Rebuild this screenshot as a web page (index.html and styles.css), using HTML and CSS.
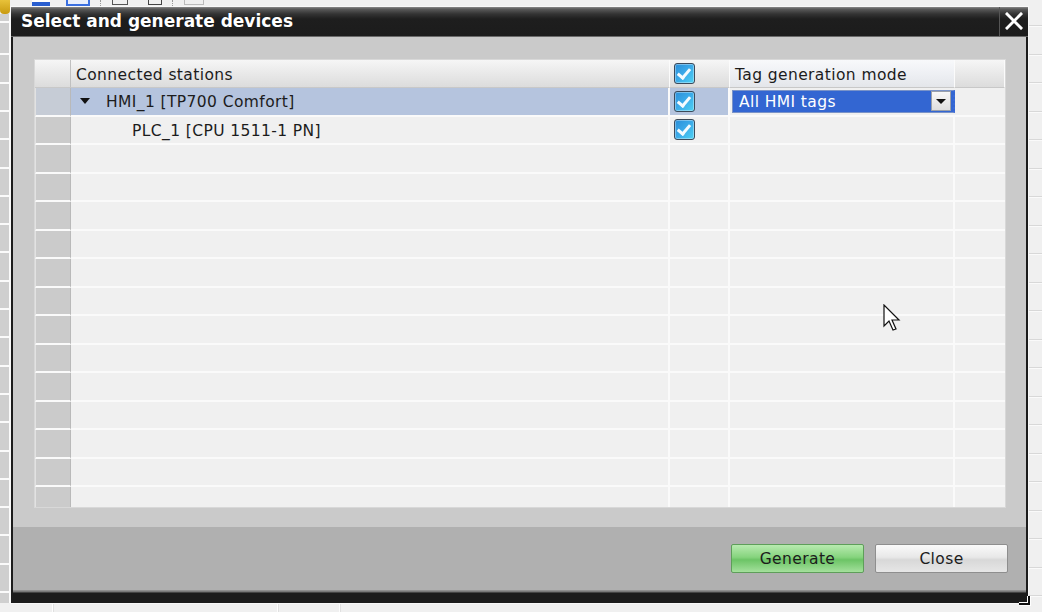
FILE: index.html
```html
<!DOCTYPE html>
<html>
<head>
<meta charset="utf-8">
<link rel="stylesheet" href="styles.css">
</head>
<body>
<div class="desktop">
  <div class="toolbar">
    <span class="tb tb-yellow"></span>
    <span class="tb tb-blue1"></span>
    <span class="tb tb-blue2"></span>
    <span class="tb-sep"></span>
    <span class="tb tb-grey1"></span>
    <span class="tb tb-grey2"></span>
    <span class="tb-sep"></span>
    <span class="tb tb-grey3"></span>
  </div>
  <div class="left-strip"></div>
  <div class="right-strip"></div>
  <div class="bottom-strip"><span class="bl bl1"></span><span class="bl bl2"></span><span class="bl bl3"></span></div>

  <div class="dialog">
    <div class="titlebar">
      <div class="title">Select and generate devices</div>
      <div class="close-btn">
        <svg width="18" height="18" viewBox="0 0 18 18"><path d="M2 2 L16 16 M16 2 L2 16" stroke="#fff" stroke-width="3" stroke-linecap="square"/></svg>
      </div>
    </div>
    <div class="body">
      <div class="table">
        <div class="row head">
          <div class="c rh"></div>
          <div class="c c1">Connected stations</div>
          <div class="c c2"><span class="cb"></span></div>
          <div class="c c3">Tag generation mode</div>
          <div class="c c4"></div>
        </div>
        <div class="row sel">
          <div class="c rh"></div>
          <div class="c c1"><span class="tri"></span><span class="lbl">HMI_1 [TP700 Comfort]</span></div>
          <div class="c c2"><span class="cb"></span></div>
          <div class="c c3">
            <div class="dropdown"><span class="dd-text">All HMI tags</span><span class="dd-btn"><span class="dd-tri"></span></span></div>
          </div>
          <div class="c c4"></div>
        </div>
        <div class="row">
          <div class="c rh"></div>
          <div class="c c1"><span class="lbl child">PLC_1 [CPU 1511-1 PN]</span></div>
          <div class="c c2"><span class="cb"></span></div>
          <div class="c c3"></div>
          <div class="c c4"></div>
        </div>
        <div class="row"><div class="c rh"></div><div class="c c1"></div><div class="c c2"></div><div class="c c3"></div><div class="c c4"></div></div>
        <div class="row"><div class="c rh"></div><div class="c c1"></div><div class="c c2"></div><div class="c c3"></div><div class="c c4"></div></div>
        <div class="row"><div class="c rh"></div><div class="c c1"></div><div class="c c2"></div><div class="c c3"></div><div class="c c4"></div></div>
        <div class="row"><div class="c rh"></div><div class="c c1"></div><div class="c c2"></div><div class="c c3"></div><div class="c c4"></div></div>
        <div class="row"><div class="c rh"></div><div class="c c1"></div><div class="c c2"></div><div class="c c3"></div><div class="c c4"></div></div>
        <div class="row"><div class="c rh"></div><div class="c c1"></div><div class="c c2"></div><div class="c c3"></div><div class="c c4"></div></div>
        <div class="row"><div class="c rh"></div><div class="c c1"></div><div class="c c2"></div><div class="c c3"></div><div class="c c4"></div></div>
        <div class="row"><div class="c rh"></div><div class="c c1"></div><div class="c c2"></div><div class="c c3"></div><div class="c c4"></div></div>
        <div class="row"><div class="c rh"></div><div class="c c1"></div><div class="c c2"></div><div class="c c3"></div><div class="c c4"></div></div>
        <div class="row"><div class="c rh"></div><div class="c c1"></div><div class="c c2"></div><div class="c c3"></div><div class="c c4"></div></div>
        <div class="row"><div class="c rh"></div><div class="c c1"></div><div class="c c2"></div><div class="c c3"></div><div class="c c4"></div></div>
        <div class="row"><div class="c rh"></div><div class="c c1"></div><div class="c c2"></div><div class="c c3"></div><div class="c c4"></div></div>
        <div class="row last"><div class="c rh"></div><div class="c c1"></div><div class="c c2"></div><div class="c c3"></div><div class="c c4"></div></div>
      </div>
    </div>
    <div class="footer">
      <button class="btn btn-gen">Generate</button>
      <button class="btn btn-close">Close</button>
    </div>
    <div class="bottom-bar"></div>
    <svg class="grip" width="14" height="12" viewBox="0 0 14 12"><path d="M11 1 L11 9 L1 9" stroke="#fff" stroke-width="4" fill="none"/><path d="M11 1 L11 9 L1 9" stroke="#111" stroke-width="2" fill="none"/></svg>
  </div>

  <svg class="cursor" width="20" height="30" viewBox="0 0 20 30">
    <path d="M1 1 L1 22 L6 17 L10 26 L13 25 L9 16 L16 16 Z" fill="#fff" stroke="#111" stroke-width="1.2" stroke-linejoin="miter"/>
  </svg>
</div>
</body>
</html>
```
FILE: styles.css
```css
html, body {
  margin: 0;
  padding: 0;
}
body {
  width: 1042px;
  height: 612px;
  overflow: hidden;
  background: #f0f0f0;
  font-family: "DejaVu Sans", Verdana, sans-serif;
}
.desktop {
  position: relative;
  width: 1042px;
  height: 612px;
  overflow: hidden;
  background: #f0f0f0;
}
.toolbar {
  display: flex;
  align-items: flex-start;
  height: 7px;
  overflow: visible;
}
.tb { display: block; height: 8px; }
.tb-yellow { width: 10px; height: 14px; background: linear-gradient(#e8c23a, #c89a10); border-radius: 0 0 4px 4px; }
.tb-blue1 { width: 18px; margin-left: 22px; background: linear-gradient(#ffffff 0 2px, #2a5fd0 2px 4px, #f0f0f0 4px); border-bottom: 2px solid #2a5fd0; height: 4px; }
.tb-blue2 { width: 20px; margin-left: 16px; border: 2px solid #3a6fe0; border-top: none; height: 4px; background: #e8eefc; }
.tb-sep { width: 1px; height: 6px; margin: 0 10px; border-left: 1px dotted #999; }
.tb-grey1 { width: 14px; height: 4px; border: 1px solid #555; border-top: none; }
.tb-grey2 { width: 12px; height: 4px; border: 1px solid #444; border-top: none; margin-left: 20px; }
.tb-grey3 { width: 18px; height: 4px; border: 1px solid #bbb; border-top: none; }

.left-strip {
  position: absolute;
  left: 0; top: 14px;
  width: 9px; height: 598px;
  border-right: 2px solid #fafafa;
  background: repeating-linear-gradient(#cfcfcf 0 26.3px, #fafafa 26.3px 28.3px);
  background-position: 0 13px;
}
.right-strip {
  position: absolute;
  right: 0; top: 0;
  width: 13px; height: 612px;
  background: repeating-linear-gradient(#f0f0f0 0 26.5px, #d8d8d8 26.5px 27.5px, #fafafa 27.5px 28.5px);
  background-position: 0 -1px;
}
.bottom-strip {
  position: absolute;
  left: 0; bottom: 0;
  width: 1042px; height: 9px;
  background: #f0f0f0;
}
.bl { position: absolute; top: 0; width: 1px; height: 9px; background: #fdfdfd; border-right: 1px solid #e0e0e0; }
.bl1 { left: 52px; }
.bl2 { left: 277px; }
.bl3 { left: 339px; }

.dialog {
  position: absolute;
  left: 11px;
  top: 7px;
  width: 1017px;
  height: 596px;
  display: flex;
  flex-direction: column;
  background: #1c1c1c;
  box-shadow: 0 0 0 1px #f8f8f8;
}
.titlebar {
  height: 30px;
  flex: none;
  display: flex;
  align-items: stretch;
  background: linear-gradient(#8a8a8a 0, #5a5a5a 2px, #333 7px, #1e1e1e 12px, #1c1c1c 100%);
  border-bottom: 1px solid #6a6a6a;
  box-sizing: border-box;
}
.title {
  flex: 1;
  color: #fff;
  font-weight: bold;
  font-size: 17px;
  padding-left: 10px;
  line-height: 29px;
  text-shadow: 0 0 1px rgba(0,0,0,0.6);
}
.close-btn {
  width: 28px;
  border-left: 1px solid #555;
  display: flex;
  align-items: center;
  justify-content: center;
  padding-bottom: 1px;
}
.body {
  flex: none;
  height: 490px;
  box-sizing: border-box;
  background: #cacaca;
  margin: 0 2px;
  padding: 23px 21px 0 22px;
}
.table {
  width: 970px;
  height: 447px;
  overflow: hidden;
  background: #f0f0f0;
  box-shadow: 0 0 0 1px #d8d8d8;
}
.row {
  display: grid;
  grid-template-columns: 36px 599px 60px 225px 50px;
  height: 28.5px;
}
.row.head { height: 28px; }
.c {
  box-sizing: border-box;
  border-bottom: 2px solid #fafafa;
  border-right: 2px solid #fafafa;
  display: flex;
  align-items: center;
  font-size: 15.5px;
  letter-spacing: 0.4px;
  color: #1c1c1c;
  white-space: nowrap;
}
.c1, .c3 { padding-top: 2px; }
.rh {
  background: #cbcbcb;
  border-left: 1px solid #e2e2e2;
  border-right: 1px solid #b9b9b9;
}
.c4 { border-right: none; }
.head .c {
  background: linear-gradient(#f6f6f6, #e6e6e6 60%, #dcdcdc);
  border-bottom: 1px solid #c8c8c8;
  border-right: 1px solid #fbfbfb;
}
.head .rh { border-right: 1px solid #c0c0c0; border-left: none; }
.head .c1 { padding-left: 5px; }
.head .c3 { padding-left: 5px; background: linear-gradient(#f8f9fb, #eceef2 60%, #e4e6ea); }
.c2 { justify-content: flex-start; padding-left: 4px; }
.sel .rh { background: #c6ccd6; }
.sel .c1, .sel .c2 { background: #b5c4de; }
.tri {
  width: 0; height: 0;
  margin-left: 9px;
  margin-bottom: 2px;
  border-left: 5px solid transparent;
  border-right: 5px solid transparent;
  border-top: 6px solid #111;
}
.lbl { padding-left: 16px; }
.lbl.child { padding-left: 61px; }
.cb {
  display: block;
  width: 19px;
  height: 19px;
  border: 1px solid #3c4a5a;
  border-radius: 3px;
  background: linear-gradient(135deg, #2a8ed8 0%, #3aa8e8 45%, #4ed2f4 100%);
  box-shadow: inset 0 0 0 1px rgba(255,255,255,0.35);
  position: relative;
}
.cb::after {
  content: "";
  position: absolute;
  left: 5px;
  top: 2px;
  width: 5px;
  height: 10px;
  border-right: 3px solid #f4fbff;
  border-bottom: 3px solid #f4fbff;
  transform: rotate(40deg);
}
.sel .c3 { padding: 0 0 0 2px; align-items: stretch; border-right: none; }
.dropdown {
  flex: 1;
  margin: 2px 0;
  display: flex;
  align-items: center;
  background: #3366d2;
  border: 1px solid #7a93c8;
  border-right: 2px dotted #3a6ad8;
  box-sizing: border-box;
}
.dd-text {
  flex: 1;
  color: #fff;
  padding-left: 6px;
  padding-top: 2px;
  font-size: 15.5px;
}
.dd-btn {
  width: 20px;
  height: 20px;
  margin-right: 2px;
  background: linear-gradient(#f8f8f8, #dedede);
  border: 1px solid #9aa0aa;
  box-sizing: border-box;
  display: flex;
  align-items: center;
  justify-content: center;
}
.dd-tri {
  width: 0; height: 0;
  border-left: 5px solid transparent;
  border-right: 5px solid transparent;
  border-top: 5px solid #111;
}
.footer {
  flex: none;
  height: 63px;
  box-sizing: border-box;
  margin: 0 2px;
  background: #b0b0b0;
  display: flex;
  justify-content: flex-end;
  align-items: flex-start;
  gap: 11px;
  padding: 17px 18px 0 0;
}
.btn {
  width: 133px;
  height: 29px;
  font-family: "DejaVu Sans", Verdana, sans-serif;
  font-size: 15.5px;
  color: #1c1c1c;
  border-radius: 2px;
  padding: 1px 0 0;
  letter-spacing: 0.4px;
}
.btn-gen {
  background: linear-gradient(#b8eab0 0%, #86d47e 45%, #6cc466 55%, #a4e09c 100%);
  border: 1px solid #5e9e5a;
}
.btn-close {
  background: linear-gradient(#fafafa 0%, #e8e8e8 45%, #d8d8d8 55%, #e6e6e6 100%);
  border: 1px solid #8e8e8e;
}
.bottom-bar {
  flex: 1;
  margin: 0 2px;
  background: linear-gradient(#9a9a9a 0, #6e6e6e 2px, #1c1c1c 3px);
}
.grip {
  position: absolute;
  right: -4px;
  bottom: -4px;
}
.cursor {
  position: absolute;
  left: 883px;
  top: 304px;
}
```
